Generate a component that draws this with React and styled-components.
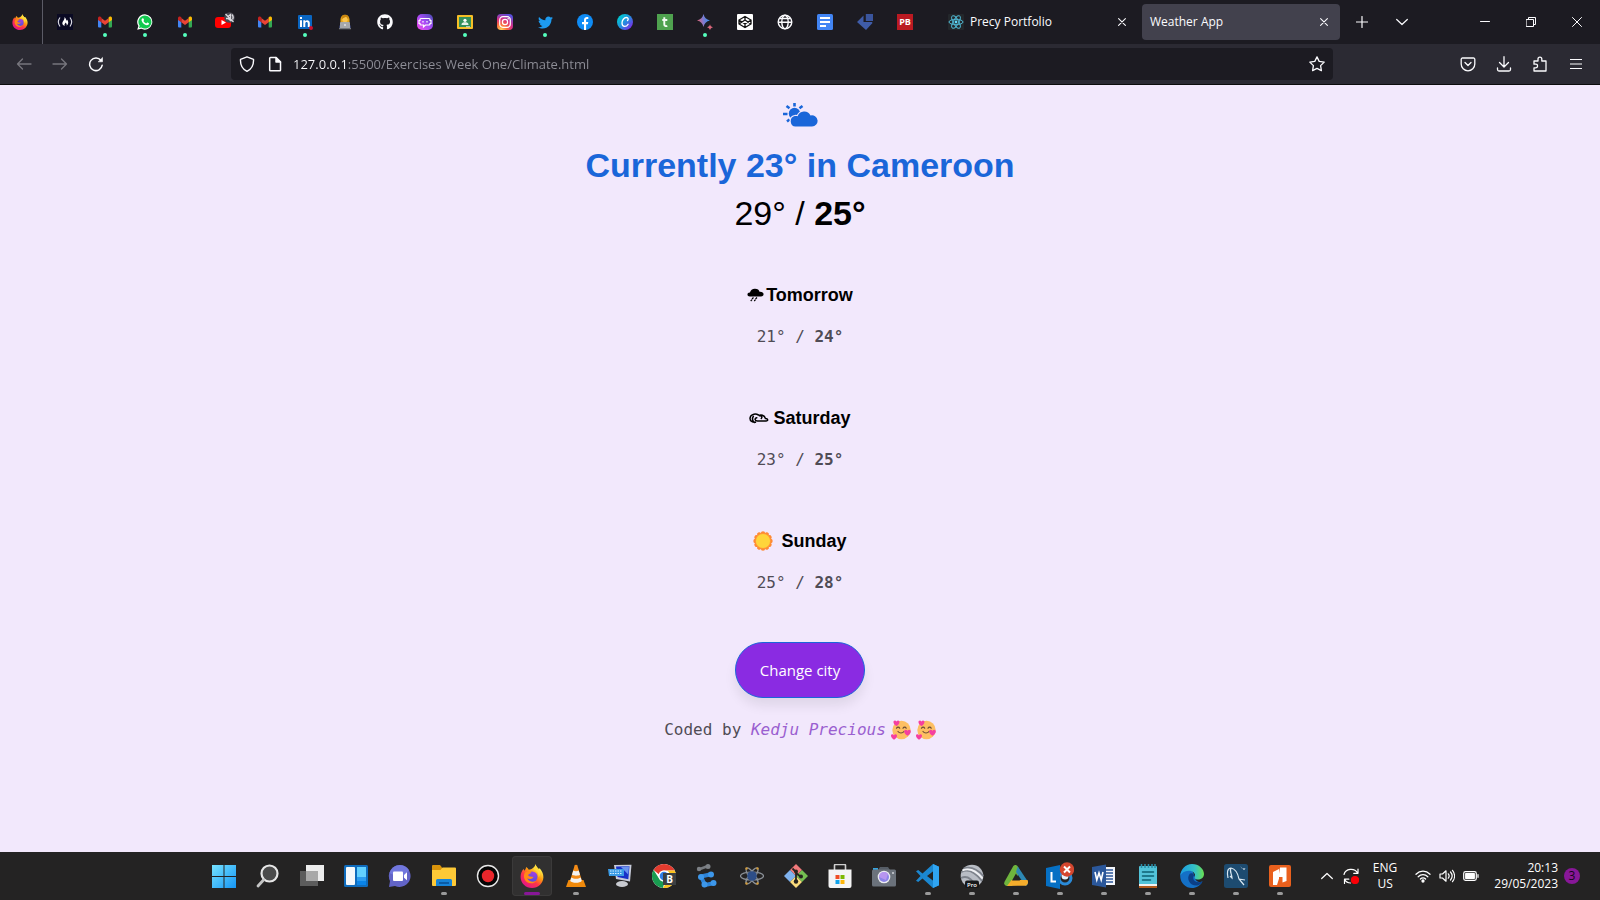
import React from "react";
import styled, { createGlobalStyle, css } from "styled-components";
import { FaGithub, FaTwitter } from "react-icons/fa";

const UI_FONT = '"Open Sans", "Noto Sans", sans-serif';

const GlobalStyle = createGlobalStyle`
  *, *::before, *::after { box-sizing: border-box; }
  body { margin: 0; background: #f2e8fc; }
  button { font: inherit; color: inherit; border: 0; padding: 0; background: none; cursor: pointer; }
  svg { display: block; flex: none; }
  h1, h2, p { margin: 0; }
`;

/* ---------- layout ---------- */

const Screen = styled.div`
  display: flex;
  flex-direction: column;
  min-height: 100vh;
  font-family: ${UI_FONT};
`;

const TabStrip = styled.div`
  display: flex;
  align-items: center;
  height: 44px;
  background: #1c1b22;
  color: #fbfbfe;
`;

const FirefoxView = styled.button`
  display: flex;
  align-items: center;
  justify-content: center;
  width: 43px;
  height: 44px;
  padding-right: 2px;
  border-right: 1px solid #5b5b66;
  margin-right: 2px;
`;

const PinnedTab = styled.button`
  position: relative;
  display: flex;
  align-items: center;
  justify-content: center;
  width: 40px;
  height: 44px;
  ${(p) =>
    p.$notify &&
    css`
      &::after {
        content: "";
        position: absolute;
        left: 18px;
        top: 33px;
        width: 4px;
        height: 4px;
        border-radius: 2px;
        background: #54ffbd;
      }
    `}
`;

const Tabs = styled.div`
  display: flex;
  gap: 4px;
  margin: 0 12px 0 15px;
`;

const Tab = styled.div`
  display: flex;
  align-items: center;
  width: 198px;
  height: 36px;
  padding: 0 8px;
  border-radius: 4px;
  background: ${(p) => (p.$active ? "#42414d" : "transparent")};
`;

const TabTitle = styled.button`
  display: flex;
  align-items: center;
  gap: 6px;
  flex: 1;
  font-size: 12px;
  line-height: 22px;
  text-align: left;
`;

const IconButton = styled.button`
  display: flex;
  align-items: center;
  justify-content: center;
  width: ${(p) => p.$width || 36}px;
  height: 32px;
  color: ${(p) => (p.$dim ? "#77767e" : "#fbfbfe")};
`;

const CloseTab = styled(IconButton)`
  width: 16px;
  height: 16px;
`;

const WindowControls = styled.div`
  display: flex;
  margin-left: auto;
`;

const Toolbar = styled.div`
  display: flex;
  align-items: center;
  height: 41px;
  padding: 0 6px;
  background: #2b2a33;
  border-bottom: 1px solid #0c0c0d;
  color: #fbfbfe;
`;

const UrlBar = styled.div`
  display: flex;
  align-items: center;
  flex: 1;
  height: 32px;
  margin: 0 117px;
  padding: 0 2px;
  border-radius: 4px;
  background: #1c1b22;
`;

const UrlInput = styled.input`
  flex: 1;
  min-width: 0;
  height: 28px;
  padding: 0 0 0 4px;
  border: 0;
  outline: 0;
  font-family: ${UI_FONT};
  font-size: 13px;
  color: transparent;
  background: linear-gradient(90deg, #fbfbfe 58px, #8f8f98 58px);
  background-clip: text;
  -webkit-background-clip: text;
`;

const Page = styled.main`
  display: flex;
  flex-direction: column;
  align-items: center;
  flex: 1;
  padding: 8px 16px 24px;
  background: #f2e8fc;
  color: #000;
  font-family: "Liberation Sans", Arial, sans-serif;
  text-align: center;
`;

const NowIcon = styled.div`
  height: 48px;
  padding-top: 10px;
`;

const NowTitle = styled.h1`
  font-size: 34px;
  line-height: 48px;
  color: #1a66d9;
`;

const NowRange = styled.p`
  font-size: 34px;
  line-height: 48px;
`;

const Forecast = styled.section`
  display: flex;
  flex-direction: column;
  gap: 57px;
  margin: 46px 0 47px;
`;

const Day = styled.article`
  display: flex;
  flex-direction: column;
  align-items: center;
  gap: 18px;
`;

const DayName = styled.h2`
  display: flex;
  align-items: center;
  gap: ${(p) => p.$gap}px;
  font-size: 18px;
  line-height: 24px;
`;

const MonoText = styled.p`
  font-family: "DejaVu Sans Mono", "Liberation Mono", monospace;
  font-size: 16px;
  line-height: 24px;
  color: #504c55;
`;

const CityButton = styled.button`
  height: 56px;
  padding: 0 24px;
  border: 1px solid #1a66d9;
  border-radius: 28px;
  background: #8a2be2;
  color: #fff;
  font-family: ${UI_FONT};
  font-size: 15px;
  box-shadow: 0 8px 12px rgba(0, 0, 0, 0.08);
`;

const Credit = styled(MonoText)`
  display: flex;
  align-items: center;
  gap: 5px;
  margin-top: 20px;
`;

const AuthorLink = styled.a`
  font-style: italic;
  color: #9a5fd0;
  text-decoration: none;
`;

const Taskbar = styled.footer`
  display: flex;
  align-items: center;
  height: 48px;
  background: #242323;
  color: #fff;
`;

const Apps = styled.nav`
  display: flex;
  margin-left: auto;
`;

const TaskbarApp = styled.button`
  position: relative;
  display: flex;
  align-items: center;
  justify-content: center;
  width: 40px;
  height: 40px;
  margin: 0 2px;
  border-radius: 4px;
  ${(p) =>
    p.$active &&
    css`
      background: #313030;
      box-shadow: inset 0 0 0 1px #3b3a3a;
    `}
  ${(p) =>
    (p.$running || p.$active) &&
    css`
      &::after {
        content: "";
        position: absolute;
        left: ${p.$active ? 12 : 17}px;
        bottom: 1px;
        width: ${p.$active ? 16 : 6}px;
        height: 3px;
        border-radius: 2px;
        background: ${p.$active ? "#881798" : "#9a9a9a"};
      }
    `}
`;

const Tray = styled.div`
  display: flex;
  align-items: center;
  justify-content: flex-end;
  width: 298px;
  padding-right: 20px;
  font-size: 12px;
  line-height: 16px;
`;

const TrayButton = styled.button`
  display: flex;
  align-items: center;
  justify-content: center;
  gap: ${(p) => p.$gap || 0}px;
  margin-right: ${(p) => p.$after || 0}px;
`;

const TrayText = styled.button`
  text-align: ${(p) => p.$align};
  margin-right: ${(p) => p.$after}px;
`;

const TrayLine = styled.span`
  display: block;
`;

const Badge = styled.span`
  width: 16px;
  height: 16px;
  border-radius: 8px;
  background: #881798;
  color: #16051a;
  text-align: center;
`;

/* ---------- drawings ---------- */

const Svg = ({ s = 16, w, h, vb = "0 0 16 16", children }) => (
  <svg width={w || s} height={h || s} viewBox={vb} fill="none" aria-hidden="true">
    {children}
  </svg>
);

const Line = ({ children, s = 16, vb, sw = 1.3 }) => (
  <Svg s={s} vb={vb}>
    <g stroke="currentColor" strokeWidth={sw} strokeLinecap="round" strokeLinejoin="round">
      {children}
    </g>
  </Svg>
);

const Firefox = ({ s = 16 }) => (
  <Svg s={s} vb="0 0 24 24">
    <defs>
      <linearGradient id="ffBody" x1="20" y1="2" x2="5" y2="22" gradientUnits="userSpaceOnUse">
        <stop offset="0.1" stopColor="#fff44f" />
        <stop offset="0.4" stopColor="#ff980e" />
        <stop offset="0.65" stopColor="#ff3647" />
        <stop offset="1" stopColor="#e31587" />
      </linearGradient>
      <radialGradient id="ffGlobe" cx="14" cy="9" r="8" gradientUnits="userSpaceOnUse">
        <stop offset="0" stopColor="#a23fe0" />
        <stop offset="1" stopColor="#5b4de0" />
      </radialGradient>
    </defs>
    <path d="M15.3.2c.6 2.2 2 3.3 3.6 4.8.5-.1.6-.5.6-1 2.5 2.8 4 6 3.9 9.2C23.200 19.300 18.200 24 12 24 5.700 24 .6 19.200.6 13c0-3.200 1-6 3.200-8.200 0 .9.200 1.500.6 2C5.400 5.500 6 4.300 6.200 3c1.200.7 2 1.600 2.600 2.700C11.600 5.300 15 3.500 15.300.2z" fill="url(#ffBody)" />
    <circle cx="12.300" cy="12.700" r="5.200" fill="url(#ffGlobe)" />
    <path d="M5 8.500c2.500-1.500 5-1 6.500.6-.6.500-3 .7-3.300 2.200.8 1.800 3.200 1.200 5.200 1.600-1 2.200-4 2.600-6.300 1.400 1.500 3.200 5.500 4.500 9 2.700-2.500 3.500-9.500 3.300-11.600-2C3.500 12.500 3.800 10.200 5 8.500z" fill="#ff8a16" />
    <path d="M14 5.500c3.500 1.200 5.300 4.400 4.500 8 2-2.700 2-6.500-.6-9.200L15.300.2C15 3 14.500 4.300 14 5.500z" fill="#ffd93a" />
  </Svg>
);

const Gmail = () => (
  <Svg>
    <path d="M1 3.800 4.300 6.200V13.500H2A1 1 0 0 1 1 12.500z" fill="#4285f4" />
    <path d="M15 3.800 11.700 6.200V13.500H14a1 1 0 0 0 1-1z" fill="#34a853" />
    <path d="M4.300 4 8 6.800 11.700 4v4.300L8 11 4.300 8.300z" fill="#ea4335" />
    <path d="M1 4.200C1 2.500 2.900 2 4.300 3.100V8.300L1 5.900z" fill="#c5221f" />
    <path d="M15 4.200C15 2.500 13.100 2 11.700 3.100V8.300L15 5.900z" fill="#fbbc04" />
  </Svg>
);

const CodeCamp = () => (
  <Svg>
    <path fill="#0a0a23" d="M0 0h16v16H0z" />
    <path d="M3 3.500C.8 6.500.8 9.500 3 12.500M13 3.500c2.200 3 2.200 6 0 9" stroke="#d7d7e0" strokeWidth="1.200" />
    <path d="M7.600 3c1.600 1.600 1.200 2.800 2.200 3.800.3-.4.300-.8.200-1.200 1.700 2 1.800 4.600-.4 6.200.5-1.600 0-2.400-1.200-3.300.2 1-.8 1.200-.9 2-.1.500 0 .9.300 1.400C5 11 4.800 8.800 6.200 7 7 5.800 7.700 5 7.600 3z" fill="#fff" />
  </Svg>
);

const WhatsApp = () => (
  <Svg>
    <path d="M8 .2A7.700 7.700 0 0 0 1.400 12L.2 15.800 4.200 14.800A7.700 7.700 0 1 0 8 .2z" fill="#fff" />
    <path d="M8 1.500A6.500 6.500 0 0 0 2.700 11.800L2 14l2.300-.6A6.500 6.500 0 1 0 8 1.500z" fill="#12c94f" />
    <path d="M5.500 4.300c.8-.4 1 .1 1.600 1.700-.1.500-.5.700-.7 1 .7 1.200 1.600 1.900 2.800 2.400l1-1c.4 0 1.500.6 1.900.9.100 1.300-1 2-2.200 2C7.200 10.800 4.600 8 4.500 6c0-.7.400-1.300 1-1.700z" fill="#fff" />
  </Svg>
);

const YouTube = () => (
  <Svg w={20} h={20} vb="0 0 20 20">
    <rect x="0" y="5" width="16" height="11" rx="3" fill="#f00" />
    <path d="M6.500 8v5l4.500-2.500z" fill="#fff" />
    <circle cx="14.500" cy="5.500" r="5.300" fill="#47464f" />
    <path d="M10.500 2l8 8M11 6.500h2l2.500 2V2.500L13.500 4M17 2.500c1.200 1.500 1.500 3.500.6 5" stroke="#d9d9de" strokeWidth="1.300" />
  </Svg>
);

const LinkedIn = () => (
  <Svg>
    <rect x="1" y="1" width="14" height="14" rx="1" fill="#0a66c2" />
    <path d="M3 6.300h2V13H3zM3 3h2v2H3zM6.300 6.300h1.900v1c1-1.600 4.600-1.500 4.600 1.700v4h-2V9.500c0-2-2.500-2-2.500 0V13h-2z" fill="#fff" />
    <circle cx="14" cy="14" r="2" fill="#cb112d" />
  </Svg>
);

const Coder = () => (
  <Svg>
    <path d="M3.500 8C3 3 5 .7 8 .7S13 3 12.500 8z" fill="#e3a51a" />
    <circle cx="8" cy="5.500" r="2.700" fill="#fcc64d" />
    <path d="M5.300 5C6 3.500 8 3.500 9 2.700c1 .6 1.600 1.300 1.700 2.400L12 4 10 1H6L4.300 4z" fill="#c9860f" />
    <path d="M2 15c0-5 2-6 6-6s6 1 6 6z" fill="#3b4470" />
    <rect x="3" y="8" width="10" height="6.500" rx=".8" fill="#a6a8ab" />
    <path d="M2 14h12v1.300H2z" fill="#74777b" />
    <circle cx="8" cy="11" r=".9" fill="#e8e8e8" />
  </Svg>
);

const ChatBot = () => (
  <Svg>
    <defs>
      <linearGradient id="botFill" x1="2" y1="14" x2="14" y2="2" gradientUnits="userSpaceOnUse">
        <stop stopColor="#e34bef" />
        <stop offset="0.5" stopColor="#a54bf5" />
        <stop offset="1" stopColor="#5b4cc0" />
      </linearGradient>
    </defs>
    <rect width="16" height="16" rx="5" fill="url(#botFill)" />
    <path d="M4 4.500h8a1 1 0 0 1 1 1V6.500h1v3h-1v.5a1 1 0 0 1-1 1H8.500L6.500 12.800V11H4a1 1 0 0 1-1-1v-.5H2v-3h1v-1a1 1 0 0 1 1-1z" stroke="#fff" strokeWidth="1.200" />
    <path d="M6 7v1.500M10 7v1.500" stroke="#fff" strokeWidth="1.200" />
  </Svg>
);

const Classroom = () => (
  <Svg>
    <rect y="1" width="16" height="14" rx="1" fill="#f6bf26" />
    <path fill="#34915b" d="M2 3h12v10H2z" />
    <circle cx="8" cy="6.300" r="1.600" fill="#fff" />
    <path d="M4.500 11c0-2.500 2-2.700 3.500-2.700s3.500.2 3.500 2.700z" fill="#e5f3ea" />
    <path fill="#e3e3e3" d="M9 12.300h4v1H9z" />
  </Svg>
);

const Instagram = () => (
  <Svg>
    <defs>
      <radialGradient id="igFill" cx="4" cy="16" r="17" gradientUnits="userSpaceOnUse">
        <stop stopColor="#ffd85a" />
        <stop offset="0.35" stopColor="#fa6a3b" />
        <stop offset="0.65" stopColor="#d92d83" />
        <stop offset="1" stopColor="#5a4fdb" />
      </radialGradient>
    </defs>
    <rect width="16" height="16" rx="4" fill="url(#igFill)" />
    <rect x="2.700" y="2.700" width="10.600" height="10.600" rx="3.200" stroke="#fff" strokeWidth="1.200" />
    <circle cx="8" cy="8" r="2.600" stroke="#fff" strokeWidth="1.200" />
    <circle cx="11.200" cy="4.800" r=".8" fill="#fff" />
  </Svg>
);

const Facebook = () => (
  <Svg>
    <circle cx="8" cy="8" r="8" fill="#0f8cf5" />
    <path d="M7 16v-5.700H5V8h2V6.300C7 4 8.300 3 10 3c.7 0 1.300.1 1.300.1v2H10.200C9.300 5.100 9.100 5.600 9.100 6.300V8h2.200l-.4 2.300H9.100V16z" fill="#fff" />
  </Svg>
);

const Canva = () => (
  <Svg>
    <defs>
      <linearGradient id="canvaFill" x1="2" y1="3" x2="14" y2="14" gradientUnits="userSpaceOnUse">
        <stop stopColor="#00c8d2" />
        <stop offset="0.5" stopColor="#258cdf" />
        <stop offset="1" stopColor="#7a2be8" />
      </linearGradient>
    </defs>
    <circle cx="8" cy="8" r="8" fill="url(#canvaFill)" />
    <path d="M10.500 6.500c1.200-1 .8-3-1-3C7 3.500 5 6.300 5 9c0 2.200 1 3.400 2.600 3.400 1.500 0 2.800-.9 3.500-2.200" stroke="#fff" strokeWidth="1.300" strokeLinecap="round" />
  </Svg>
);

const GreenT = () => (
  <Svg>
    <path fill="#4fa24f" d="M0 0h16v16H0z" />
    <path d="M7.300 3.300v7.200c0 1.500 1.400 1.900 3 1.300M5.300 6h5" stroke="#f4fbf4" strokeWidth="1.900" />
  </Svg>
);

const Bard = () => (
  <Svg>
    <defs>
      <linearGradient id="bardFill" x1="1" y1="8" x2="12" y2="6" gradientUnits="userSpaceOnUse">
        <stop stopColor="#d9667b" />
        <stop offset="0.5" stopColor="#7f7ad0" />
        <stop offset="1" stopColor="#3b8de8" />
      </linearGradient>
    </defs>
    <path d="M6.500 0C7.400 3.700 9.300 5.600 13 6.500 9.300 7.400 7.400 9.300 6.500 13 5.600 9.300 3.700 7.400 0 6.500 3.700 5.600 5.600 3.700 6.500 0z" fill="url(#bardFill)" />
    <path d="M13 10.200c.5 1.800 1.200 2.500 3 3-1.800.5-2.500 1.200-3 3-.5-1.800-1.200-2.500-3-3 1.800-.5 2.500-1.200 3-3z" fill="#d9667b" />
  </Svg>
);

const CodePen = () => (
  <Svg>
    <rect width="16" height="16" rx="1" fill="#fff" />
    <path d="M8 2.500 14 6v4L8 13.500 2 10V6zM8 2.500V6.300M8 9.700v3.800M2 6l6 4 6-4M2 10l6-4 6 4" stroke="#111" strokeWidth="1.300" />
  </Svg>
);

const Globe = () => (
  <Svg>
    <g stroke="#fbfbfe" strokeWidth="1.400">
      <circle cx="8" cy="8" r="6.800" />
      <ellipse cx="8" cy="8" rx="3.200" ry="6.800" />
      <path d="M1.500 8.300h13M2.500 4.500h11" />
    </g>
  </Svg>
);

const Docs = () => (
  <Svg>
    <rect width="16" height="16" rx="1.500" fill="#4285f4" />
    <path d="M3 4h10M3 8h10M3 12h6" stroke="#fff" strokeWidth="1.800" />
  </Svg>
);

const BlueArrow = () => (
  <Svg>
    <path d="M6.500 1.500V8H15L15.500 9 9 16 0 8z" fill="#3f5ca8" />
    <path d="M8.800 0H16v7H8.800z" fill="#3a559d" />
  </Svg>
);

const PBIcon = styled.span`
  width: 16px;
  height: 16px;
  background: #bb1a22;
  color: #fff;
  font-size: 9px;
  font-weight: 700;
  line-height: 16px;
  text-align: center;
`;

const ReactLogo = () => (
  <Svg>
    <rect width="16" height="16" rx="1" fill="#23272b" />
    <g stroke="#4fb6d2" strokeWidth="1">
      <ellipse cx="8" cy="8" rx="7" ry="2.700" />
      <ellipse cx="8" cy="8" rx="7" ry="2.700" transform="rotate(60 8 8)" />
      <ellipse cx="8" cy="8" rx="7" ry="2.700" transform="rotate(120 8 8)" />
    </g>
    <circle cx="8" cy="8" r="1.400" fill="#61dafb" />
  </Svg>
);

const Cross = () => (
  <Line s={8} vb="0 0 8 8" sw={1.1}>
    <path d="M.6.600 7.400 7.400M7.400.600.6 7.400" />
  </Line>
);

const NowWeather = () => (
  <Svg w={36} h={24} vb="0 0 36 24">
    <g stroke="#1a66d9" strokeWidth="2.600">
      <path d="M12.500 0v3.500M4.500 3l3 2.200M20.500 3l-3 2.200M1 11h4.500M5 18.500l2.500-2" />
    </g>
    <circle cx="12.500" cy="10.500" r="5.700" fill="#1a66d9" />
    <path d="M13.500 23.500a5.300 5.300 0 0 1-.8-10.400c1-.3 2-.2 2.900.1A7 7 0 0 1 28.500 12.500a5.600 5.600 0 1 1 1.500 11z" fill="#1a66d9" stroke="#f2e8fc" strokeWidth="2.200" paintOrder="stroke" />
  </Svg>
);

const RainCloud = () => (
  <Svg w={17} h={14} vb="0 0 17 14">
    <path d="M3 8.500C-.5 8.500-.3 4.300 3 4.500 3.500 2 5.500.600 8 .7c2.700 0 4 1.300 4.500 3 5-.4 5.200 4.800 1.500 4.800z" fill="#000" />
    <path d="M6.500 9.500 5 11M10 9.500 8.500 11M5 11.700 3.700 13M8.500 11.700 7.200 13" stroke="#000" strokeWidth="1.200" />
  </Svg>
);

const WindyCloud = () => (
  <Svg w={20} h={11} vb="0 0 20 11">
    <path d="M8.500 8H17c2.500 0 2-2.800-.6-2.600C15.500 2 11.500 1.200 9.800 2.900 12.500 2 13.500 4 12.300 5.500M9.500 2C5.500-.3 1 2 1 5.500c0 2.500 2.500 4 5.500 3.700M8.500 8C5.500 8 5.300 5 7.800 4.800M4.300 3.300C3 5.500 3.500 8 5.500 9.500" stroke="#000" strokeWidth="1.500" strokeLinecap="round" />
  </Svg>
);

const Sun = () => (
  <Svg s={20} vb="0 0 20 20">
    <g fill="#ff8a33">
      {[0, 30, 60, 90, 120, 150, 180, 210, 240, 270, 300, 330].map((a) => (
        <circle key={a} cx="10" cy="2.500" r="2.200" transform={`rotate(${a} 10 10)`} />
      ))}
    </g>
    <circle cx="10" cy="10" r="7.800" fill="#ff9a38" />
    <circle cx="10" cy="10" r="7.100" fill="#ffd53b" />
  </Svg>
);

const Heart = ({ t }) => (
  <path d="M0 3C-4 .5-3.500-2.600-1.500-2.600-.6-2.600 0-1.700 0-1.400 0-1.700.6-2.600 1.500-2.600 3.500-2.600 4 .5 0 3z" fill="#f53fa0" transform={t} />
);

const LoveFace = () => (
  <Svg s={20} vb="0 0 20 20">
    <circle cx="10.500" cy="10" r="9.200" fill="#fdbf62" />
    <path d="M5.500 8.200c.8-1.500 2.500-1.500 3.200 0M12 8.200c.8-1.500 2.500-1.500 3.200 0M7 11.500c1.500 2 4.500 2 6 0" stroke="#6a4b35" strokeWidth="1.200" strokeLinecap="round" />
    <Heart t="translate(5.500 3)" />
    <Heart t="translate(16.500 12.500) scale(1.100)" />
    <Heart t="translate(3 16.800)" />
  </Svg>
);

const T = ({ children }) => (
  <Svg s={24} vb="0 0 24 24">
    {children}
  </Svg>
);

const StartIcon = () => (
  <T>
    <defs>
      <linearGradient id="winFill" x1="0" y1="0" x2="24" y2="24" gradientUnits="userSpaceOnUse">
        <stop stopColor="#77e4ff" />
        <stop offset="1" stopColor="#1595f5" />
      </linearGradient>
    </defs>
    <path d="M0 1h11.500v11H0zM12.500 1H24v11H12.500zM0 13h11.500v11H0zM12.500 13H24v11H12.500z" fill="url(#winFill)" />
  </T>
);
const SearchIcon = () => (
  <T>
    <circle cx="13.500" cy="9.500" r="8" fill="#4b4b4b" stroke="#e6e6e6" strokeWidth="2.200" />
    <path d="M7.500 16 2 22" stroke="#c4c4c4" strokeWidth="2.800" strokeLinecap="round" />
  </T>
);
const TaskViewIcon = () => (
  <T>
    <path fill="#ececec" d="M6 1h18v16H6z" />
    <path fill="#5c5c5c" d="M0 7h18v15H0z" />
    <path fill="#a8a8a8" d="M6 7h12v10H6z" />
  </T>
);
const WidgetsIcon = () => (
  <T>
    <rect y="1" width="24" height="22" rx="1.500" fill="#0f6cbd" />
    <rect x="2" y="3" width="9" height="18" rx="1" fill="#f5f8fb" />
    <path fill="#62d0ff" d="M13 3h9v10h-9z" />
    <path fill="#2b9cf0" d="M13 13h9v4h-9z" />
    <path fill="#0a84e8" d="M13 17h9v4h-9z" />
  </T>
);
const ChatIcon = () => (
  <T>
    <path d="M12 1a11 11 0 1 1-5 21L1 23l1-6A11 11 0 0 1 12 1z" fill="#6264c7" />
    <path d="M12 1A11 11 0 0 0 1.500 9L14 15 21 6A11 11 0 0 0 12 1z" fill="#7b83eb" opacity=".6" />
    <rect x="5" y="7.500" width="10" height="9.500" rx="1" fill="#fff" />
    <path d="m16 11 3-2.700v8L16 13.700z" fill="#fff" />
  </T>
);
const FolderIcon = () => (
  <T>
    <path d="M0 2a1 1 0 0 1 1-1h7l2 2.500V8H0z" fill="#d9930b" />
    <path d="M0 6h8.500l2-2.500H23a1 1 0 0 1 1 1V21a1 1 0 0 1-1 1H1a1 1 0 0 1-1-1z" fill="#fdc937" />
    <path d="M4 22v-5.500A1.500 1.500 0 0 1 5.500 15h13a1.500 1.500 0 0 1 1.500 1.500V22z" fill="#1683d8" />
    <path d="M7 18h10v2H7z" fill="#0a5ba5" />
  </T>
);
const RecordIcon = () => (
  <T>
    <circle cx="12" cy="12" r="10.500" fill="#050505" stroke="#e8e8e8" strokeWidth="1.400" />
    <circle cx="12" cy="12" r="6.200" fill="#e9262b" />
  </T>
);
const VlcIcon = () => (
  <T>
    <path d="M4.500 16h15l2.500 7H2z" fill="#f08a0c" />
    <path d="M10.600 1.500c.4-1 2.400-1 2.800 0L18 17c-2 2.600-10 2.600-12 0z" fill="#f48b16" />
    <path d="m9.300 6.500-1.300 4.300c2 1.200 6 1.200 8 0l-1.300-4.300c-1.500.9-3.900.9-5.400 0zM7.300 13.500 6.200 17c2 2.400 9.600 2.400 11.600 0l-1.100-3.500c-2.500 1.800-6.900 1.800-9.400 0z" fill="#f2f2f2" />
  </T>
);
const MonitorIcon = () => (
  <T>
    <ellipse cx="14" cy="20" rx="6" ry="3" fill="#c9cbd1" />
    <path d="m6 1 17.500-.3L22 17.500 8 15z" fill="#c8ccda" />
    <path d="m8 2.500 13.500-.3-1.200 13L9.500 13z" fill="#1832c8" />
    <path d="m13 3 8-.5-.8 8z" fill="#6b93ee" />
    <path d="M0 5h16v7H1z" fill="#3b9be5" />
    <path d="M2 7h12M2 9.500h12" stroke="#d7efff" strokeDasharray="1.500 1" />
  </T>
);
const ChromeIcon = () => (
  <T>
    <circle cx="12" cy="12" r="12" fill="#fff" />
    <path d="M12 0a12 12 0 0 1 10.600 6.500H12a5.500 5.500 0 0 0-5.200 3.700L1.600 6A12 12 0 0 1 12 0z" fill="#e33b2e" />
    <path d="M1.600 6 7 14.500A5.500 5.500 0 0 0 12.500 17.500L11 24A12 12 0 0 1 1.600 6z" fill="#189c50" />
    <path d="M22.600 6.500A12 12 0 0 1 11 24l5.500-9a5.500 5.500 0 0 0-1.500-8.500z" fill="#fcc31e" />
    <circle cx="12" cy="12" r="5.500" fill="#fff" />
    <circle cx="12" cy="12" r="4.300" fill="#2f7de8" />
    <rect x="11" y="9" width="13" height="12" fill="#3c4043" />
    <text x="17.500" y="19" textAnchor="middle" fontFamily="Open Sans" fontWeight="700" fontSize="10" fill="#fff">B</text>
  </T>
);
const ChainIcon = () => (
  <T>
    <path d="m4 5 8-3" stroke="#777b80" strokeWidth="2.500" strokeLinecap="round" />
    <g fill="#7d8186"><circle cx="3" cy="5" r="2.200" /><circle cx="12" cy="2.500" r="2.500" /></g>
    <path d="m5 12.500 11-2.500M5 12.500l4 8.500 10-2" stroke="#2c83d8" strokeWidth="4" />
    <g fill="#3d97ea"><circle cx="5" cy="13" r="3" /><circle cx="15" cy="10.500" r="3" /><circle cx="8.500" cy="20.500" r="3" /><circle cx="17.500" cy="19" r="3" /></g>
  </T>
);
const AtomIcon = () => (
  <T>
    <g stroke="#8c9299" strokeWidth="1.200">
      <ellipse cx="12" cy="12" rx="11.500" ry="4" />
      <ellipse cx="12" cy="12" rx="9.500" ry="3" transform="rotate(55 12 12)" />
      <ellipse cx="12" cy="12" rx="9.500" ry="3" transform="rotate(-55 12 12)" />
    </g>
    <circle cx="12" cy="12" r="4.800" fill="#2d4e88" />
    <g fill="#d39b3a"><circle cx="6.500" cy="4.500" r="1.200" /><circle cx="17.500" cy="4.500" r="1.200" /><circle cx="6.500" cy="19.500" r="1.200" /><circle cx="17.500" cy="19.500" r="1.200" /></g>
  </T>
);
const GitIcon = () => (
  <T>
    <path d="m12 0 6 6-6 6-6-6z" fill="#f2797b" />
    <path d="m6 6 6 6-6 6-6-6z" fill="#7fb2ee" />
    <path d="m18 6 6 6-6 6-6-6z" fill="#74bf52" />
    <path d="m12 12 6 6-6 6-6-6z" fill="#fbdc7c" />
    <path d="M8.500 4.500 12 8v9M12 9l5 4" stroke="#26231f" strokeWidth="1.800" />
    <g fill="#26231f"><circle cx="12" cy="7.500" r="2" /><circle cx="12" cy="17.500" r="2.200" /><circle cx="17" cy="12.500" r="2" /></g>
  </T>
);
const StoreIcon = () => (
  <T>
    <path d="M6.500 6V1.500a1 1 0 0 1 1-1h9a1 1 0 0 1 1 1V6" stroke="#cfcfcf" strokeWidth="1.600" />
    <path d="M.5 5.500h23V22a2 2 0 0 1-2 2h-19a2 2 0 0 1-2-2z" fill="#f4f4f4" />
    <path fill="#f04e24" d="M7.500 11H11.500v4h-4z" />
    <path fill="#7db900" d="M12.500 11h4v4h-4z" />
    <path fill="#10a2ea" d="M7.500 16H11.500v4h-4z" />
    <path fill="#fdb60a" d="M12.500 16h4v4h-4z" />
  </T>
);
const CameraIcon = () => (
  <T>
    <path d="M1 4h5v4H1z" fill="#35a5e0" />
    <path d="M8 3h8l2 3H6z" fill="#565d66" />
    <rect y="5.500" width="24" height="17" rx="1.500" fill="#6b727b" />
    <circle cx="12" cy="13" r="6.300" fill="#ececf1" />
    <circle cx="12" cy="13" r="5" fill="#8c84e8" />
    <path d="M12 8a5 5 0 0 0-5 5l7 3 2-6.500A5 5 0 0 0 12 8z" fill="#c99cf2" opacity=".7" />
    <circle cx="21" cy="9" r="1" fill="#cfd3d8" />
  </T>
);
const CodeIcon = () => (
  <T>
    <path d="m17 0 6 2.700v18.600L17 24 6.500 14.500 2.200 18 0 16.700 4.500 12 0 7.300 2.200 6l4.300 3.500zM17.500 7 11 12l6.500 5z" fill="#1b87d0" fillRule="evenodd" />
    <path d="m17 0 6 2.700v18.600L17 24z" fill="#2fa5f2" />
  </T>
);
const EarthIcon = () => (
  <T>
    <circle cx="12" cy="12" r="11.300" fill="#b9bdc5" />
    <path d="M1.500 8C7 5 14 7 22 17M3.500 4.500C11 2 18 6 23.300 12M1 14c6-3 11 1 15 8" stroke="#7d828b" strokeWidth="1.800" />
    <path d="M2.500 6.300C9 3.800 16 6.500 22.600 14.500" stroke="#f0f1f4" strokeWidth="1.800" />
    <rect x="5" y="16.500" width="14" height="7.500" rx="2" fill="#17181a" />
    <text x="12" y="23" textAnchor="middle" fontFamily="Open Sans" fontWeight="600" fontSize="6" fill="#fff">Pro</text>
  </T>
);
const TriangleIcon = () => (
  <T>
    <path d="M9 2.500c1.300-2 3.500-2 4.800 0L16 7 8 22H3c-2.500-.3-3.500-2.300-2.300-4.500z" fill="#6fb53d" />
    <path d="M13.800 2.500 23.500 17c1 2 .3 4-2 5L12 8z" fill="#2d88b4" />
    <path d="M7.500 16h16c1.300 2.500 0 5.500-2.500 5.700L3 22z" fill="#f5ad2c" />
    <path d="M12 9.500 16 16.500H8z" fill="#242323" />
  </T>
);
const LyncIcon = () => (
  <Svg w={28} h={28} vb="0 0 28 28">
    <circle cx="19" cy="16" r="6" stroke="#2a8ad8" strokeWidth="3" />
    <circle cx="19" cy="14" r="3.500" fill="#e5f2fc" />
    <path d="m0 6 14-3v24L0 24z" fill="#0670c4" />
    <path d="M5.500 10v9.500H10" stroke="#fff" strokeWidth="2" />
    <circle cx="21" cy="7.500" r="7.200" fill="#d4472f" />
    <path d="m18 4.500 6 6M24 4.500l-6 6" stroke="#fff" strokeWidth="2" />
  </Svg>
);
const WordIcon = () => (
  <T>
    <path d="M11 3h12v18H11z" fill="#f4f6fb" />
    <path d="M14 6h7M14 9h7M14 12h7M14 15h7M14 18h7" stroke="#2b579a" strokeWidth="1.300" />
    <path d="M0 3 14 .5v23L0 21z" fill="#2b579a" />
    <path d="m3 8 1.800 8L7 9l2.200 7L11 8" stroke="#fff" strokeWidth="1.600" />
  </T>
);
const NotesIcon = () => (
  <T>
    <path d="M3 20h18v4H3z" fill="#b25a1c" />
    <path d="M3 19.500h18V22H3z" fill="#f1f1f1" />
    <rect x="3" y="2" width="18" height="18" rx="1" fill="#52c3d8" />
    <path d="M5.500 0v4M9 0v4M12.500 0v4M16 0v4M19 0v4" stroke="#2a8ea8" strokeWidth="1.500" />
    <path d="M6.500 8h11M6.500 12h11M6.500 16h8" stroke="#0d6172" strokeWidth="1.500" strokeLinecap="round" />
  </T>
);
const EdgeIcon = () => (
  <T>
    <defs>
      <linearGradient id="edgeTop" x1="1" y1="8" x2="24" y2="8" gradientUnits="userSpaceOnUse">
        <stop stopColor="#1b9de2" />
        <stop offset="0.6" stopColor="#35c1c5" />
        <stop offset="1" stopColor="#6ae04f" />
      </linearGradient>
    </defs>
    <path d="M.2 12C1 5 6 4 12 6l3 7c0 4 4 6 7.500 4.500C20.500 21.500 16.500 24 12 24A12 12 0 0 1 .2 12z" fill="#1470c6" />
    <path d="M9.500 10c-3.500 5 .5 12 7.500 11.500 2.500-.5 4.500-2 5.500-4-4 1.500-9 .5-9.300-3.500-.1-1.500 1-2 .8-3C13.500 9 10.500 8.500 9.500 10z" fill="#0c3f86" />
    <path d="M.2 12C.7 5 5.500 0 12 0c7 0 12 5 12 10 0 4-3.500 5.700-6.500 5.500-2.500-.2-3.500-1.300-2.700-2.500C16.500 8.500 10.500 5.300 5 7.500 2.500 8.500 1 10 .2 12z" fill="url(#edgeTop)" />
  </T>
);
const MySqlIcon = () => (
  <T>
    <rect width="24" height="24" rx="2.500" fill="#1d4b70" />
    <path d="M4 14C3 9 3 4 7 4c5 1 7 6 8 11l5 6M15 15l6 1M7 4C5 7 8 10 8 14l-2-2" stroke="#d9e7f1" strokeWidth="1.200" />
    <path d="m16 2 2 2.500h3.500L20 6z" fill="#fff" />
  </T>
);
const PdfIcon = () => (
  <T>
    <rect x="1" y="1" width="22" height="22" rx="2" fill="#e9601d" />
    <path d="M5 8 11 5v9.500l-2 6.500H5z" fill="#fff" />
    <path d="M12 3.500h6.500V17l-4 1.500V13H10.500z" fill="#fff" />
  </T>
);

const pinned = [
  ["freeCodeCamp", <CodeCamp />],
  ["Gmail inbox", <Gmail />, true],
  ["WhatsApp", <WhatsApp />, true],
  ["Gmail work", <Gmail />, true],
  ["YouTube, muted", <YouTube />],
  ["Gmail", <Gmail />],
  ["LinkedIn", <LinkedIn />, true],
  ["Coder", <Coder />],
  ["GitHub", <FaGithub size={16} />],
  ["Chat bot", <ChatBot />],
  ["Classroom", <Classroom />, true],
  ["Instagram", <Instagram />],
  ["Twitter", <FaTwitter size={15} color="#1d9bf0" />, true],
  ["Facebook", <Facebook />],
  ["Canva", <Canva />],
  ["Typing", <GreenT />],
  ["Bard", <Bard />, true],
  ["CodePen", <CodePen />],
  ["Website", <Globe />],
  ["Docs", <Docs />],
  ["Blog", <BlueArrow />],
  ["PB", <PBIcon>PB</PBIcon>],
];

const apps = [
  ["Start", <StartIcon />],
  ["Search", <SearchIcon />],
  ["Task view", <TaskViewIcon />],
  ["Widgets", <WidgetsIcon />],
  ["Chat", <ChatIcon />],
  ["File Explorer", <FolderIcon />, "running"],
  ["Recorder", <RecordIcon />],
  ["Firefox", <Firefox s={24} />, "active"],
  ["VLC", <VlcIcon />, "running"],
  ["On-screen keyboard", <MonitorIcon />],
  ["Chrome", <ChromeIcon />],
  ["Links", <ChainIcon />],
  ["Atom", <AtomIcon />],
  ["Git", <GitIcon />],
  ["Store", <StoreIcon />],
  ["Camera", <CameraIcon />],
  ["VS Code", <CodeIcon />, "running"],
  ["Earth Pro", <EarthIcon />, "running"],
  ["Download manager", <TriangleIcon />, "running"],
  ["Lync", <LyncIcon />, "running"],
  ["Word", <WordIcon />, "running"],
  ["Notepad", <NotesIcon />, "running"],
  ["Edge", <EdgeIcon />, "running"],
  ["MySQL Workbench", <MySqlIcon />, "running"],
  ["PDF", <PdfIcon />, "running"],
];

const days = [
  { name: "Tomorrow", icon: <RainCloud />, gap: 2, low: 21, high: 24 },
  { name: "Saturday", icon: <WindyCloud />, gap: 4, low: 23, high: 25 },
  { name: "Sunday", icon: <Sun />, gap: 8, low: 25, high: 28 },
];

export default function App() {
  return (
    <Screen>
      <GlobalStyle />
      <TabStrip>
        <FirefoxView aria-label="Firefox View"><Firefox /></FirefoxView>
        {pinned.map(([label, icon, notify]) => (
          <PinnedTab key={label} aria-label={label} $notify={notify}>{icon}</PinnedTab>
        ))}
        <Tabs>
          <Tab>
            <TabTitle><ReactLogo />Precy Portfolio</TabTitle>
            <CloseTab aria-label="Close Precy Portfolio"><Cross /></CloseTab>
          </Tab>
          <Tab $active>
            <TabTitle>Weather App</TabTitle>
            <CloseTab aria-label="Close Weather App"><Cross /></CloseTab>
          </Tab>
        </Tabs>
        <IconButton $width={20} aria-label="New tab">
          <Line s={12} vb="0 0 12 12" sw={1.2}><path d="M6 .5v11M.5 6h11" /></Line>
        </IconButton>
        <IconButton $width={60} aria-label="List all tabs">
          <Line s={12} vb="0 0 12 12" sw={1.2}><path d="m.7 3.500 5.300 5 5.300-5" /></Line>
        </IconButton>
        <WindowControls>
          <IconButton $width={46} aria-label="Minimize">
            <Line s={10} vb="0 0 10 10" sw={1}><path d="M.5 4.500h9" /></Line>
          </IconButton>
          <IconButton $width={46} aria-label="Restore">
            <Line s={10} vb="0 0 10 10" sw={1}><path d="M.5 2.500h7v7h-7zM2.500 2.500v-2h7v7h-2" /></Line>
          </IconButton>
          <IconButton $width={46} aria-label="Close">
            <Line s={10} vb="0 0 10 10" sw={1}><path d="m.5.500 9 9M9.500.500l-9 9" /></Line>
          </IconButton>
        </WindowControls>
      </TabStrip>

      <Toolbar>
        <IconButton $dim aria-label="Back"><Line><path d="M15 8H1.500M6.500 3l-5 5 5 5" /></Line></IconButton>
        <IconButton $dim aria-label="Forward"><Line><path d="M1 8h13.500M9.500 3l5 5-5 5" /></Line></IconButton>
        <IconButton aria-label="Reload">
          <Line sw={1.500}><path d="M14.200 9.200A6.300 6.300 0 1 1 13 4.500" /><path d="M14.500 1.800v4h-4z" fill="currentColor" strokeWidth=".6" /></Line>
        </IconButton>
        <UrlBar>
          <IconButton $width={28} aria-label="Tracking protection">
            <Line sw={1.400}><path d="M8 .8 14.500 3.300c.3 5-1.500 9.500-6.500 12C3 12.800 1.200 8.300 1.500 3.300z" /></Line>
          </IconButton>
          <IconButton $width={28} aria-label="Site information">
            <Line sw={1.500}><path d="M3.500 1.500H9L13.500 6v8a.8.8 0 0 1-.8.800H3.500a.8.800 0 0 1-.8-.800V2.300a.8.8 0 0 1 .8-.8z" /><path d="M9 1.500V6h4.500z" fill="currentColor" /></Line>
          </IconButton>
          <UrlInput aria-label="Address" defaultValue="127.0.0.1:5500/Exercises Week One/Climate.html" spellCheck={false} />
          <IconButton $width={28} aria-label="Bookmark this page">
            <Line><path d="m8 .9 2.200 4.500 5 .7-3.600 3.500.8 5L8 12.300l-4.400 2.300.8-5L.8 6.100l5-.7z" /></Line>
          </IconButton>
        </UrlBar>
        <IconButton aria-label="Save to Pocket">
          <Line><path d="M2.500 2h11a1.300 1.300 0 0 1 1.300 1.300V8a6.800 6.800 0 0 1-13.600 0V3.300A1.300 1.300 0 0 1 2.500 2zM5 6.500l3 3 3-3" /></Line>
        </IconButton>
        <IconButton aria-label="Downloads">
          <Line><path d="M8 .7v10M3.500 6.500 8 11l4.500-4.500M1.500 12v1.500a1.500 1.500 0 0 0 1.500 1.500h10a1.500 1.500 0 0 0 1.500-1.500V12" /></Line>
        </IconButton>
        <IconButton aria-label="Extensions">
          <Line><path d="M2 5h4V3a1.900 1.900 0 0 1 3.800 0v2H14v10H2v-3.200h1.800a1.800 1.800 0 0 0 0-3.600H2z" /></Line>
        </IconButton>
        <IconButton aria-label="Open menu">
          <Line s={12} vb="0 0 12 12" sw={1.200}><path d="M.5 1.500h11M.5 6h11M.5 10.500h11" /></Line>
        </IconButton>
      </Toolbar>

      <Page>
        <NowIcon><NowWeather /></NowIcon>
        <NowTitle>Currently 23° in Cameroon</NowTitle>
        <NowRange>29° / <strong>25°</strong></NowRange>
        <Forecast>
          {days.map((d) => (
            <Day key={d.name}>
              <DayName $gap={d.gap}>{d.icon}{d.name}</DayName>
              <MonoText>{d.low}° / <strong>{d.high}°</strong></MonoText>
            </Day>
          ))}
        </Forecast>
        <CityButton>Change city</CityButton>
        <Credit>
          <span>Coded by <AuthorLink href="#author">Kedju Precious</AuthorLink></span>
          <LoveFace />
          <LoveFace />
        </Credit>
      </Page>

      <Taskbar>
        <Apps>
          {apps.map(([label, icon, state]) => (
            <TaskbarApp key={label} aria-label={label} $running={state === "running"} $active={state === "active"}>{icon}</TaskbarApp>
          ))}
        </Apps>
        <Tray>
          <TrayButton aria-label="Hidden icons" $after={10}>
            <Line s={12} vb="0 0 12 12" sw={1.200}><path d="m.7 8.500 5.300-5 5.300 5" /></Line>
          </TrayButton>
          <TrayButton aria-label="Sync" $after={14}>
            <Line s={16} sw={1.200}>
              <path d="M1 6.500C2.500.5 11.500-.5 14.500 5M15 1v4.300h-4.300M1.500 15.500v-4.300h4.300M1.800 11.500C3 14 5 15 7.500 15" />
              <circle cx="12" cy="12" r="3.500" fill="#fb0007" stroke="#fb0007" />
            </Line>
          </TrayButton>
          <TrayText $align="center" $after={18}>
            <TrayLine>ENG</TrayLine>
            <TrayLine>US</TrayLine>
          </TrayText>
          <TrayButton aria-label="Network, volume and battery" $gap={8} $after={15}>
            <Line s={16} sw={1.300}>
              <path d="M1 6.200C5 2.200 11 2.200 15 6.200M3.200 8.700c2.700-2.700 6.900-2.700 9.600 0M5.400 11c1.500-1.500 3.700-1.500 5.200 0" />
              <circle cx="8" cy="13" r="1" fill="currentColor" />
            </Line>
            <Line s={16} sw={1.200}>
              <path d="M1 6h2.500L7 2.800v10.400L3.500 10H1zM9.300 5.800c1 1.300 1 3.100 0 4.400M11.500 4c2 2.400 2 5.600 0 8M13.500 2.300c2.700 3.400 2.700 8 0 11.400" />
            </Line>
            <Line s={16} sw={1.200}>
              <rect x=".7" y="3.700" width="12.600" height="8.600" rx="1.800" />
              <rect x="2.700" y="5.700" width="8.600" height="4.600" fill="currentColor" />
              <path d="M15 6.700v2.600" />
            </Line>
          </TrayButton>
          <TrayText $align="right" $after={6}>
            <TrayLine>20:13</TrayLine>
            <TrayLine>29/05/2023</TrayLine>
          </TrayText>
          <Badge>3</Badge>
        </Tray>
      </Taskbar>
    </Screen>
  );
}
